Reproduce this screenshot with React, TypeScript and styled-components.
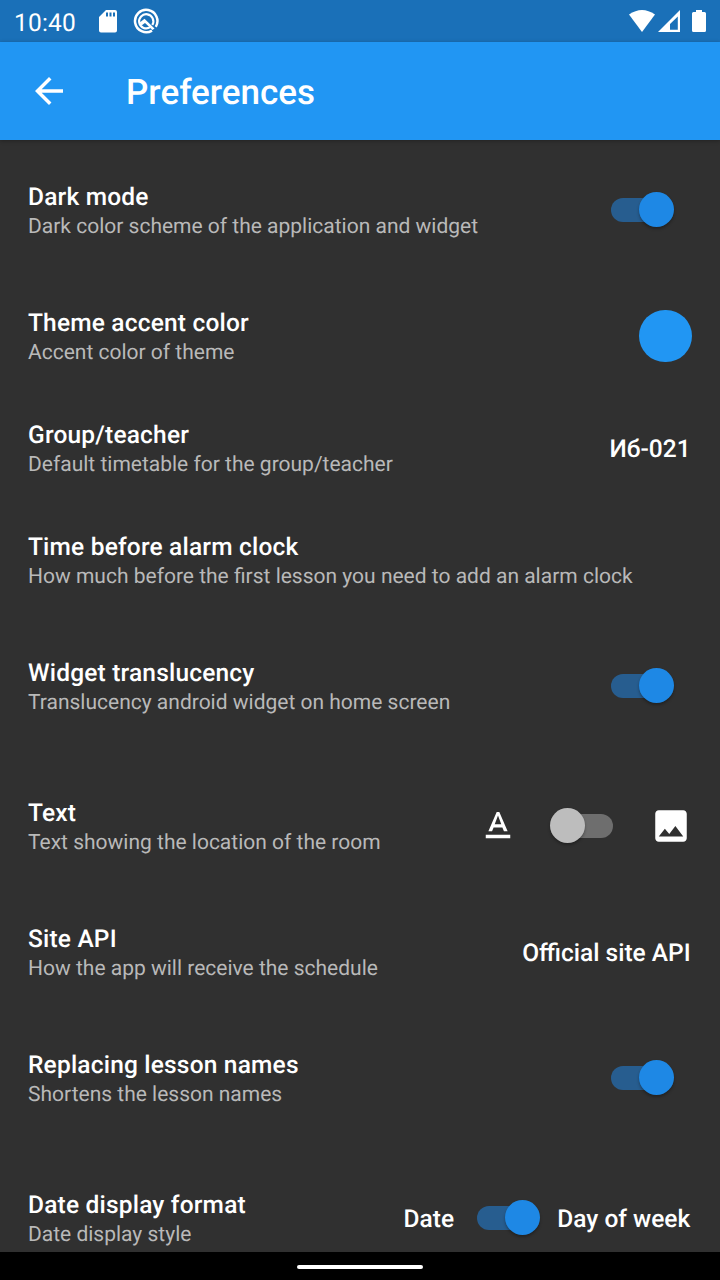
import React from "react";
import styled, { createGlobalStyle } from "styled-components";

const GlobalStyle = createGlobalStyle`
  * { box-sizing: border-box; }
  html, body { margin: 0; background: #303030; overflow: hidden; }
  body {
    font-family: Roboto, "Liberation Sans", sans-serif;
    color: #fff;
    text-rendering: geometricPrecision;
    -webkit-font-smoothing: antialiased;
  }
`;

const Screen = styled.div`
  width: 720px;
  height: 1280px;
  display: flex;
  flex-direction: column;
  overflow: hidden;
  background: #303030;
`;

const StatusBar = styled.header`
  flex: none;
  height: 42px;
  display: flex;
  align-items: center;
  justify-content: space-between;
  padding: 0 13px 0 14px;
  background: #1a70b8;
`;

const StatusGroup = styled.div`
  display: flex;
  align-items: center;
`;

const Clock = styled.span`
  width: 84px;
  font-size: 24.5px;
  line-height: 42px;
  padding-top: 3px;
  letter-spacing: 0.2px;
`;

const StatusIcon = styled.svg<{ $gap?: number }>`
  display: block;
  margin-left: ${(p) => p.$gap ?? 0}px;
`;

const AppBar = styled.div`
  flex: none;
  position: relative;
  height: 98px;
  display: flex;
  align-items: center;
  padding-left: 28px;
  background: #2196f3;
  box-shadow: 0 1px 4px rgba(0, 0, 0, 0.3);
`;

const Title = styled.h1`
  margin: 4px 0 0 56px;
  font-size: 35px;
  line-height: 42px;
  font-weight: 500;
`;

const List = styled.main`
  flex: 1;
  min-height: 0;
  overflow: hidden;
`;

const Row = styled.section<{ $tall?: boolean }>`
  height: ${(p) => (p.$tall ? 140 : 112)}px;
  display: flex;
  align-items: center;
  justify-content: space-between;
  padding: 0 28.5px 0 28px;
  white-space: nowrap;
`;

const RowTitle = styled.h2`
  margin: 0;
  font-size: 24.5px;
  line-height: 29px;
  font-weight: 500;
  letter-spacing: 0.19px;
`;

const RowText = styled.p`
  margin: 4px 0 0;
  font-size: 21px;
  line-height: 24px;
  color: #b9b9b9;
`;

const Controls = styled.div<{ $gap?: number }>`
  display: flex;
  align-items: center;
  gap: ${(p) => p.$gap ?? 0}px;
`;

const Value = styled.span<{ $end?: number }>`
  margin-right: ${(p) => p.$end ?? 0}px;
  font-size: 24.5px;
  line-height: 29px;
  font-weight: 500;
`;

const Swatch = styled.div`
  width: 52.5px;
  height: 52.5px;
  border-radius: 50%;
  background: #2196f3;
`;

const SwitchBox = styled.div`
  width: 103.25px;
  height: 84px;
  display: flex;
  align-items: center;
  justify-content: center;
`;

const Track = styled.div<{ $on: boolean }>`
  width: 57.75px;
  height: 24.5px;
  display: flex;
  align-items: center;
  justify-content: ${(p) => (p.$on ? "flex-end" : "flex-start")};
  border-radius: 13px;
  background: ${(p) => (p.$on ? "#275d8f" : "#6e6e6e")};
`;

const Thumb = styled.div<{ $on: boolean }>`
  flex: none;
  width: 35px;
  height: 35px;
  margin: -1px -5.25px 0;
  border-radius: 50%;
  background: ${(p) => (p.$on ? "#1e88e5" : "#bdbdbd")};
  box-shadow: 0 2px 3px rgba(0, 0, 0, 0.3);
`;

const NavBar = styled.footer`
  flex: none;
  height: 28px;
  display: flex;
  justify-content: center;
  padding-top: 13px;
  background: #000;
`;

const Handle = styled.div`
  width: 126px;
  height: 4px;
  border-radius: 2px;
  background: #fff;
`;

const Switch = ({ on = false }: { on?: boolean }) => (
  <SwitchBox role="switch" aria-checked={on}>
    <Track $on={on}>
      <Thumb $on={on} />
    </Track>
  </SwitchBox>
);

const Icon = ({ d }: { d: string }) => (
  <svg width="42" height="42" viewBox="0 0 24 24" fill="#fff">
    <path d={d} />
  </svg>
);

const ARROW = "M20 11H7.83l5.59-5.59L12 4l-8 8 8 8 1.41-1.41L7.83 13H20v-2z";
const TEXT_FORMAT =
  "M5 17v2h14v-2H5zm4.5-4.2h5l.9 2.2h2.1L12.75 4h-1.5L6.5 15h2.1l.9-2.2zM12 5.98L13.87 11h-3.74L12 5.98z";
const IMAGE =
  "M21 19V5c0-1.1-.9-2-2-2H5c-1.1 0-2 .9-2 2v14c0 1.1.9 2 2 2h14c1.1 0 2-.9 2-2zM8.5 13.5l2.5 3.01L14.5 12l4.5 6H5l3.5-4.5z";

type Pref = { title: string; text: string; tall?: boolean; control?: React.ReactNode };

const prefs: Pref[] = [
  {
    title: "Dark mode",
    text: "Dark color scheme of the application and widget",
    tall: true,
    control: <Switch on />,
  },
  { title: "Theme accent color", text: "Accent color of theme", control: <Swatch /> },
  {
    title: "Group/teacher",
    text: "Default timetable for the group/teacher",
    control: <Value $end={0.9}>Иб-021</Value>,
  },
  {
    title: "Time before alarm clock",
    text: "How much before the first lesson you need to add an alarm clock",
  },
  {
    title: "Widget translucency",
    text: "Translucency android widget on home screen",
    tall: true,
    control: <Switch on />,
  },
  {
    title: "Text",
    text: "Text showing the location of the room",
    tall: true,
    control: (
      <Controls $gap={13.75}>
        <Icon d={TEXT_FORMAT} />
        <Switch />
        <Icon d={IMAGE} />
      </Controls>
    ),
  },
  {
    title: "Site API",
    text: "How the app will receive the schedule",
    control: <Value $end={0.9}>Official site API</Value>,
  },
  {
    title: "Replacing lesson names",
    text: "Shortens the lesson names",
    tall: true,
    control: <Switch on />,
  },
  {
    title: "Date display format",
    text: "Date display style",
    tall: true,
    control: (
      <Controls>
        <Value>Date</Value>
        <Switch on />
        <Value $end={1.25}>Day of week</Value>
      </Controls>
    ),
  },
];

export default function App() {
  return (
    <Screen>
      <GlobalStyle />
      <StatusBar>
        <StatusGroup>
          <Clock>10:40</Clock>
          <StatusIcon width="20" height="24" viewBox="0 0 20 24">
            <path
              fill="#fff"
              fillRule="evenodd"
              d="M8 1h9a2 2 0 0 1 2 2v18.500a2 2 0 0 1-2 2H3a2 2 0 0 1-2-2V8zM8 3.500v4h2v-4zm3.500 0v4h2v-4zm3.500 0v4h2v-4z"
            />
          </StatusIcon>
          <StatusIcon $gap={15} width="26" height="26" viewBox="0 0 26 26" fill="none" stroke="#fff">
            <path d="M22.800 18.800A11.200 11.200 0 1 0 19 22.600" strokeWidth="2.500" />
            <path d="M17.200 19.200A7.100 7.100 0 1 1 19.300 17" strokeWidth="2.200" />
            <path d="M6.800 14.500L11.500 10.800L21.500 20.500L19.500 22L12 15L8.500 17.500z" fill="#fff" stroke="none" />
          </StatusIcon>
        </StatusGroup>
        <StatusGroup>
          <StatusIcon width="28" height="24" viewBox="0 0 28 24">
            <path fill="#fff" d="M1 5.500Q14-3.500 27 5.500L14 23z" />
          </StatusIcon>
          <StatusIcon $gap={1} width="24" height="24" viewBox="0 0 24 24">
            <path fill="#fff" fillRule="evenodd" d="M23 1v22H1zM20.800 7.500L13 15V20.800h7.800z" />
          </StatusIcon>
          <StatusIcon $gap={10} width="16" height="24" viewBox="0 0 16 24">
            <path
              fill="#fff"
              d="M5 1h6v2h2.500a1.500 1.500 0 0 1 1.500 1.500v17a1.500 1.500 0 0 1-1.500 1.500h-11A1.500 1.500 0 0 1 1 21.500v-17A1.500 1.500 0 0 1 2.500 3H5z"
            />
          </StatusIcon>
        </StatusGroup>
      </StatusBar>
      <AppBar>
        <Icon d={ARROW} />
        <Title>Preferences</Title>
      </AppBar>
      <List>
        {prefs.map((p) => (
          <Row key={p.title} $tall={p.tall}>
            <div>
              <RowTitle>{p.title}</RowTitle>
              <RowText>{p.text}</RowText>
            </div>
            {p.control}
          </Row>
        ))}
      </List>
      <NavBar>
        <Handle />
      </NavBar>
    </Screen>
  );
}
